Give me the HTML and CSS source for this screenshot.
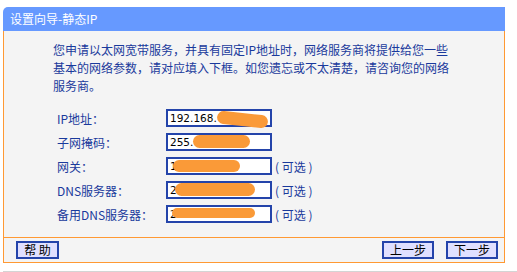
FILE: index.html
```html
<!DOCTYPE html>
<html lang="zh-CN">
<head>
    <meta charset="UTF-8">
    <title>设置向导-静态IP</title>
    <link rel="stylesheet" href="styles.css">
</head>
<body>
    <div class="page">
        <div class="panel">
            <div class="panel-title">设置向导-静态IP</div>
            <div class="panel-body">
                <p class="intro">您申请以太网宽带服务，并具有固定IP地址时，网络服务商将提供给您一些基本的网络参数，请对应填入下框。如您遗忘或不太清楚，请咨询您的网络服务商。</p>
                <div class="form">
                    <div class="row">
                        <label>IP地址：</label>
                        <div class="field">192.168.<span class="mask m1"></span></div>
                    </div>
                    <div class="row">
                        <label>子网掩码：</label>
                        <div class="field">255.<span class="mask m2"></span></div>
                    </div>
                    <div class="row">
                        <label>网关：</label>
                        <div class="field">1<span class="mask m3"></span></div>
                        <span class="opt">( 可选 )</span>
                    </div>
                    <div class="row">
                        <label>DNS服务器：</label>
                        <div class="field">2<span class="mask m4"></span></div>
                        <span class="opt">( 可选 )</span>
                    </div>
                    <div class="row">
                        <label>备用DNS服务器：</label>
                        <div class="field">2<span class="mask m5"></span></div>
                        <span class="opt">( 可选 )</span>
                    </div>
                </div>
            </div>
            <div class="panel-foot">
                <button class="btn btn-help">帮 助</button>
                <div class="nav">
                    <button class="btn">上一步</button>
                    <button class="btn">下一步</button>
                </div>
            </div>
        </div>
        <div class="bottom-line"></div>
    </div>
</body>
</html>
```

FILE: styles.css
```css
* { margin: 0; padding: 0; box-sizing: border-box; }
body { background: #fff; font-family: "Noto Sans CJK SC", "DejaVu Sans", sans-serif; font-size: 12px; }
.page { padding: 7px 0 0 3px; }
.panel { width: 502px; }
.panel-title {
    height: 24px; line-height: 24px; padding-left: 7px; color: #fff; background: #6699ff;
    border-top-left-radius: 5px; font-size: 12px;
}
.panel-body {
    background: #f4f4f4; border-left: 1px solid #ff9933; border-right: 1px solid #ff9933;
    border-bottom: 1px solid #ff9933; padding: 10px 0 14px 49px;
}
.intro { width: 400px; line-height: 18px; color: #1a3a9c; }
.form { margin-top: 14px; margin-left: 4px; display: flex; flex-direction: column; gap: 6px; }
.row { display: flex; align-items: center; height: 18px; }
.row label { width: 109px; color: #1a3a9c; }
.field {
    position: relative; width: 106px; height: 18px; background: #fff; border: 2px solid #2444aa;
    padding-left: 2px; font-family: "DejaVu Sans", sans-serif; font-size: 10.5px; line-height: 14px; color: #000;
}
.mask { position: absolute; background: #fa9a38; border-radius: 7px; }
.m1 { left: 49px; top: 2px; width: 51px; height: 13px; transform: rotate(6deg); }
.m2 { left: 25px; top: 0; width: 57px; height: 13px; }
.m3 { left: 5px; top: 1px; width: 67px; height: 12px; }
.m4 { left: 7px; top: 0; width: 80px; height: 13px; }
.m5 { left: 4px; top: 1px; width: 83px; height: 10px; }
.opt { margin-left: 3px; color: #1a3a9c; }
.panel-foot {
    display: flex; justify-content: space-between; background: #f4f4f4; padding: 3px 6px 3px 12px;
    border-left: 1px solid #ff9933; border-right: 1px solid #ff9933; border-bottom: 1px solid #ff9933;
}
.nav { display: flex; gap: 12px; }
.btn {
    width: 52px; height: 18px; background: #e0e0ff; border: 2px solid #2444aa; color: #000;
    font-family: "Noto Sans CJK SC", sans-serif; font-size: 12px; line-height: 14px;
}
.btn-help { width: 43px; }
.bottom-line { height: 1px; margin-top: 8px; background: #d4d4d4; }
```
